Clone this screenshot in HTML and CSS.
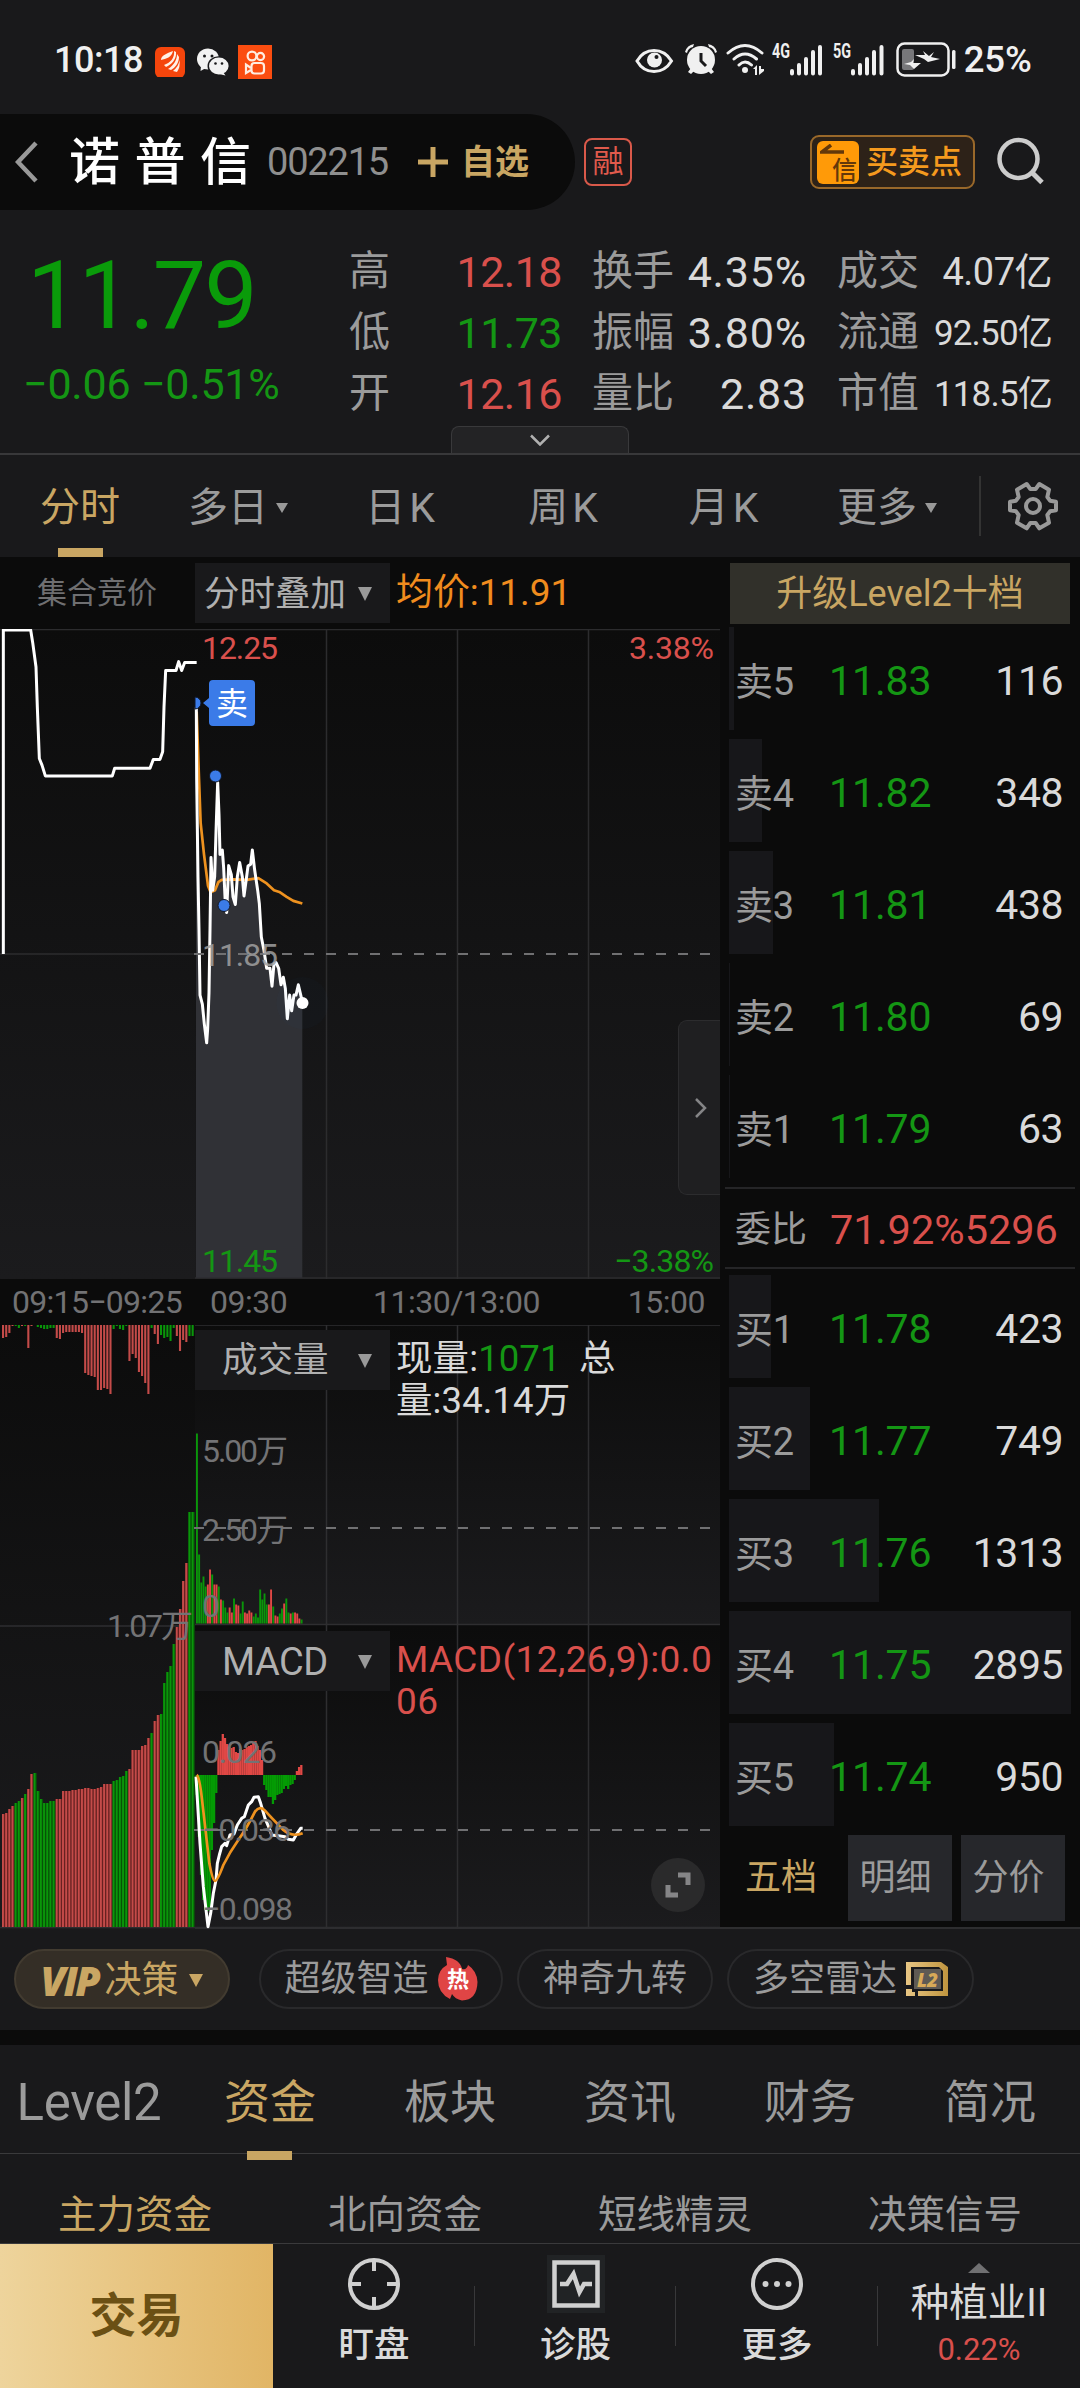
FILE: index.html
```html
<!DOCTYPE html>
<html lang="zh-CN">
<head>
<meta charset="utf-8">
<title>诺普信 002215</title>
<link rel="stylesheet" href="styles.css">
</head>
<body>
<div class="statusbar">
  <span class="clock">10:18</span>
  <svg class="app-a" width="30" height="30" viewBox="0 0 30 30"><rect width="30" height="31" rx="6" fill="#f5450c"/><g fill="#fff0e6"><path d="M6 13C11 12 17 10 18 4C13 6 6 8 6 13Z"/><path d="M9 18C15 16 20 11 19 4L21 5C22 12 16 18 11 20Z"/><path d="M13 22C19 18 22 13 22 7L24 10C24 16 20 21 16 23Z"/><path d="M18 24C22 21 24 17 24.500 13Q25.500 20 22 25Z"/></g></svg>
  <svg class="app-b" width="32" height="28" viewBox="0 0 32 28"><ellipse cx="11" cy="11" rx="11" ry="10.500" fill="#f2f2f2"/><path d="M4 18L3.500 23L9 20Z" fill="#f2f2f2"/><ellipse cx="21.500" cy="18" rx="11" ry="9.800" fill="#19191b"/><ellipse cx="21.800" cy="18" rx="9.800" ry="8.500" fill="#f2f2f2"/><path d="M26 24L28.500 27.500L22 26Z" fill="#f2f2f2"/><g fill="#19191b"><circle cx="7.500" cy="8" r="1.500"/><circle cx="15" cy="8" r="1.500"/><circle cx="18.500" cy="15.500" r="1.300"/><circle cx="25" cy="15.500" r="1.300"/></g></svg>
  <svg class="app-c" width="34" height="34" viewBox="0 0 34 34"><rect width="34" height="34" fill="#fb4d10"/><g fill="none" stroke="#ffece0" stroke-width="2.200"><circle cx="14" cy="11" r="4.400"/><circle cx="22.500" cy="11.500" r="3.600"/><rect x="13.500" y="18" width="12.500" height="10.500" rx="3"/><path d="M13 23L8 19.500V28L13 25"/></g></svg>
  <span class="spacer"></span>
  <svg class="sys" width="370" height="40" viewBox="630 40 370 40">
    <g fill="none" stroke="#f0f0f0" stroke-width="3">
      <path d="M635 62C643 48 661 48 669.500 62C661 76 643 76 635 62Z"/>
      <path d="M726 54Q743 39 760 54M732 60Q743 50 754.500 60M737 66Q743 60 749.500 66" stroke-linecap="round"/>
      <rect x="895.500" y="44.500" width="51" height="32" rx="7" stroke-width="2.500"/>
    </g>
    <circle cx="652.500" cy="61" r="7.500" fill="#f0f0f0"/><circle cx="654.500" cy="58" r="2" fill="#19191b"/>
    <g fill="#f0f0f0"><circle cx="699" cy="61" r="14"/><path d="M683 53Q685 46 692 45L691 48Q686 49 685 54Z"/><path d="M715 53Q713 46 706 45L707 48Q712 49 713 54Z"/><path d="M686 73L689 69L692 72L689 75ZM712 73L709 69L706 72L709 75Z"/><circle cx="743" cy="71" r="3"/><path d="M751 70L755 66V76H753V70ZM757 67V76L762 72V70H759V67Z"/></g>
    <path d="M699 54V62L704 67" fill="none" stroke="#19191b" stroke-width="3"/>
    <g stroke="#f0f0f0" stroke-width="4" stroke-linecap="round"><path d="M790 72V74.500M797 66V74.500M804 60V74.500M811 53V74.500M818 48V74.500M851 72V74.500M858 66V74.500M865 60V74.500M872 53V74.500M879.500 48V74.500"/></g>
    <g class="net"><text x="770" y="59" textLength="18" lengthAdjust="spacingAndGlyphs">4G</text><text x="831" y="59" textLength="18" lengthAdjust="spacingAndGlyphs">5G</text></g>
    <rect x="900" y="50" width="12" height="21" rx="2" fill="#77777a"/><rect x="950" y="51" width="3.500" height="19" rx="1.500" fill="#f0f0f0"/>
    <path d="M921 52L927 57L932 53L929 58L938 60L926 63L922 60L913 56H923ZM912 60L911 64L919 64L912 70L908 66L902 65L909 63Z" fill="#f0f0f0"/>
  </svg>
  <span class="battery">25%</span>
</div>

<header class="header">
  <div class="stock-pill">
    <svg class="back" width="24" height="42" viewBox="0 0 24 42"><path d="M21 2L3 21L21 40" fill="none" stroke="#999" stroke-width="4.500"/></svg>
    <h1>诺普信</h1>
    <span class="code">002215</span>
    <svg class="plus" width="32" height="32" viewBox="0 0 32 32"><path d="M16 1V31M1 16H31" stroke="#c9a663" stroke-width="5"/></svg>
    <span class="fav">自选</span>
  </div>
  <span class="margin-badge">融</span>
  <span class="spacer"></span>
  <div class="signal"><span class="signal-icon"><svg width="26" height="12" viewBox="0 0 26 12"><path d="M11 1L2 8H24" fill="none" stroke="#63380a" stroke-width="3.500"/></svg><i>信</i></span><span>买卖点</span></div>
  <svg class="search" width="50" height="50" viewBox="0 0 50 50"><circle cx="22.500" cy="22" r="19" fill="none" stroke="#ccc" stroke-width="4.500"/><path d="M35.500 35L46 45.500" stroke="#ccc" stroke-width="5"/></svg>
</header>

<section class="quote">
  <div class="price"><div class="last">11.79</div><div class="change">−0.06 −0.51%</div></div>
  <dl class="stats">
    <div><dt>高</dt><dd class="red">12.18</dd></div><div><dt>换手</dt><dd class="strong">4.35%</dd></div><div><dt>成交</dt><dd class="mid">4.07亿</dd></div>
    <div><dt>低</dt><dd class="green">11.73</dd></div><div><dt>振幅</dt><dd class="strong">3.80%</dd></div><div><dt>流通</dt><dd class="small">92.50亿</dd></div>
    <div><dt>开</dt><dd class="red">12.16</dd></div><div><dt>量比</dt><dd class="strong">2.83</dd></div><div><dt>市值</dt><dd class="small">118.5亿</dd></div>
  </dl>
  <div class="expander"><svg width="22" height="12" viewBox="0 0 22 12"><path d="M2 1.500L11 10.500L20 1.500" fill="none" stroke="#b0b0b0" stroke-width="2.500"/></svg></div>
</section>

<nav class="periods">
  <span class="active">分时</span><span>多日<b class="caret"></b></span><span>日<em>K</em></span><span>周<em>K</em></span><span>月<em>K</em></span><span>更多<b class="caret"></b></span>
  <div class="gear"><svg width="52" height="52" viewBox="0 0 52 52"><g fill="none" stroke="#999" stroke-width="12" stroke-linejoin="round" transform="translate(26 26) scale(.33333) translate(-219 -137)"><path d="M200 71L211 86H227L238 71L267 88L262 110L270 121L288 124V150L270 153L262 164L267 187L238 204L227 188H211L200 204L171 187L176 164L168 153L150 150V124L168 121L176 110L171 88Z"/><circle cx="219" cy="137" r="21"/></g></svg></div>
</nav>

<main class="board">
  <section class="charts">
    <div class="chart-head"><span class="auction">集合竞价</span><span class="drop">分时叠加<b class="caret big"></b></span><span class="avg">均价:11.91</span></div>
    <div class="price-chart">
      <svg width="720" height="650" viewBox="0 629 720 650">
        <defs><linearGradient id="shade" x1="0" y1="0" x2="0" y2="1"><stop offset="0" stop-color="#0c0c0c"/><stop offset="1" stop-color="#1b1b1d"/></linearGradient></defs>
        <rect y="629" width="720" height="650" fill="url(#shade)"/>
        <path d="M0 629.500H720M0 954H194M326.500 629V1279M457.500 629V1279M588.500 629V1279M195 1278H720" fill="none" stroke="#2c2c2e" stroke-width="1.500"/>
        <g transform="translate(0 600) scale(.33333 .44643)" stroke-linejoin="round">
          <path fill="#303136" d="M588 1518V240L594 620 597 740 600 885 607 905 613 950 620 992 627 880 630 740 633 577 638 650 644 620 648 520 653 408 657 480 660 570 667 560 671 600 676 680 680 700 686 595 694 615 699 665 706 682 712 620 719 588 727 620 732 663 738 630 744 596 752 592 757 560 764 605 773 650 778 680 784 755 792 785 800 825 810 825 816 865 822 815 828 812 836 825 843 862 850 845 856 870 862 938 869 885 875 920 882 885 888 885 895 862 907 900V1518Z"/>
          <path class="line orange-line" d="M590 250L597 400 602 500 612 570 624 640 632 655 645 650 655 632 665 627 700 626 740 627 775 623 800 635 822 650 838 654 860 665 880 674 907 680"/>
          <path class="line" d="M589 240L590 400 594 620 597 740 600 885 607 905 613 950 620 992 623 960 627 880 630 740 633 577 638 650 644 620 648 520 653 408 657 480 660 570 667 560 671 600 676 680 680 700 686 595 694 615 699 665 706 682 712 620 719 588 727 620 732 663 738 630 744 596 752 592 757 560 764 605 773 650 778 680 784 755 792 785 800 825 810 825 816 865 822 815 828 812 836 825 843 862 850 845 856 870 862 938 869 885 875 920 882 885 888 885 895 862 907 900"/>
          <path class="line" d="M10 793V67H92L98 95 108 150 112 240 118 355 126 370 136 394H337L344 377H450L460 357H480L488 340 492 240 497 158H528L536 138 545 158 554 140H590"/>
        </g>
        <path class="dash" d="M194 954H715"/>
        <circle cx="302.500" cy="1003" r="26" fill="#3b7be8" opacity=".025"/>
        <circle cx="302.500" cy="1003" r="6" fill="#fff"/>
        <g fill="#3b7be8" stroke="#10182a"><path d="M195 697A6 6 0 0 1 195 709Z"/><circle cx="215.500" cy="776" r="6"/><circle cx="224" cy="905.500" r="6"/></g>
        <path d="M203 703L209 698V684Q209 680 213 680H251Q255 680 255 684V722Q255 726 251 726H213Q209 726 209 722V708Z" fill="#3b7be8"/>
        <text class="tag-text" x="216" y="715">卖</text>
        <g class="axis"><text class="t-red" x="202" y="659" textLength="76">12.25</text><text class="t-mid" x="202" y="966" textLength="76">11.85</text><text class="t-green" x="202" y="1272" textLength="76">11.45</text>
        <text class="t-red" x="629" y="659" textLength="85">3.38%</text><text class="t-green" x="614" y="1272" textLength="100">−3.38%</text></g>
      </svg>
      <button class="handle" aria-label="展开"><svg width="14" height="22" viewBox="0 0 14 22"><path d="M2 2L11 11L2 20" fill="none" stroke="#858587" stroke-width="2.500"/></svg></button>
    </div>
    <div class="times"><span>09:15−09:25</span><span>09:30</span><span>11:30/13:00</span><span>15:00</span></div>
    <div class="indicators">
      <svg width="720" height="604" viewBox="0 1325 720 604">
        <rect y="1325" width="195" height="604" fill="url(#shade)"/>
        <rect x="195" y="1325" width="525" height="300" fill="url(#shade)"/><rect x="195" y="1626" width="525" height="302" fill="url(#shade)"/>
        <path d="M195 1325H720M0 1626H194M195 1624.500H720M0 1927.500H720M326.500 1325V1929M457.500 1325V1929M588.500 1325V1929" stroke="#2e2e30" stroke-width="1.500"/>
        <g id="auction-bars"></g><g id="volume-bars"></g><g id="macd-bars"></g>
        <path class="dash" d="M194 1528H715M194 1830H715"/>
        <g transform="translate(180 1560) scale(.33333)" stroke-linejoin="round">
          <path class="line" d="M48 650L60 850 70 980 84 1100 92 1060 100 1000 108 960 112 910 118 885 125 860 135 850 140 857 150 825 162 822 172 795 185 775 193 770 205 735 215 725 222 712 235 710 242 730 255 775 268 805 275 825 300 828 315 830 325 838 340 840 350 822 362 805 368 805"/>
          <path class="line orange-line" d="M50 645Q58 650 65 710T88 910Q98 963 105 963T130 915Q150 875 175 840T225 755Q240 735 255 752T310 810Q335 832 368 820"/>
        </g>
        <g class="axis t-gray"><text x="202" y="1462" textLength="86">5.00万</text><text x="202" y="1541" textLength="86">2.50万</text><text x="202" y="1617">0</text><text x="107" y="1637" textLength="86">1.07万</text><text x="202" y="1763" textLength="75">0.026</text><text x="202" y="1841" textLength="89">−0.036</text><text x="202" y="1920" textLength="91">−0.098</text></g>
      </svg>
      <div class="ind-row first"><span class="drop">成交量<b class="caret big"></b></span><p>现量:<span class="green">1071</span>&nbsp; 总<br>量:34.14万</p></div>
      <div class="ind-row second"><span class="drop macd">MACD<b class="caret big"></b></span><p class="red">MACD(12,26,9):0.0<br>06</p></div>
      <div class="enlarge"><svg width="26" height="26" viewBox="0 0 26 26"><path d="M13 3H23V13M3 13V23H13" fill="none" stroke="#858587" stroke-width="5"/></svg></div>
    </div>
  </section>

  <aside class="book">
    <div class="upgrade">升级Level2十档</div>
    <ul class="levels">
      <li><i style="width:5px"></i><span>卖5</span><b>11.83</b><em>116</em></li>
      <li><i style="width:33px"></i><span>卖4</span><b>11.82</b><em>348</em></li>
      <li><i style="width:44px"></i><span>卖3</span><b>11.81</b><em>438</em></li>
      <li><i style="width:1px"></i><span>卖2</span><b>11.80</b><em>69</em></li>
      <li><i style="width:1px"></i><span>卖1</span><b>11.79</b><em>63</em></li>
    </ul>
    <div class="ratio"><span>委比</span><b>71.92%5296</b></div>
    <ul class="levels">
      <li><i style="width:42px"></i><span>买1</span><b>11.78</b><em>423</em></li>
      <li><i style="width:81px"></i><span>买2</span><b>11.77</b><em>749</em></li>
      <li><i style="width:150px"></i><span>买3</span><b>11.76</b><em>1313</em></li>
      <li><i style="width:342px"></i><span>买4</span><b>11.75</b><em>2895</em></li>
      <li><i style="width:105px"></i><span>买5</span><b>11.74</b><em>950</em></li>
    </ul>
    <div class="book-tabs"><span class="active">五档</span><span>明细</span><span>分价</span></div>
  </aside>
</main>

<section class="chips">
  <div class="chip vip"><strong>VIP</strong>决策<b class="caret gold"></b></div>
  <div class="chip c2">超级智造<svg width="40" height="44" viewBox="0 0 40 44"><path d="M8 0Q22 2 24 12Q29 13 30 8Q39 14 39.500 25Q39 43 24 43.500Q17 42 14 37L12 42Q0 36 0 23Q0 13 9 8Z" fill="#e04545"/><text x="9" y="30">热</text></svg></div>
  <div class="chip c3">神奇九转</div>
  <div class="chip c4">多空雷达<svg width="42" height="34" viewBox="0 0 42 34"><defs><linearGradient id="gold"><stop offset="0" stop-color="#e8c684"/><stop offset="1" stop-color="#c0953f"/></linearGradient></defs><path d="M0 0H35L42 5V34H12V29H37V9L33 5H5V23H0ZM0 27H6V30H9V34H0Z" fill="url(#gold)"/><rect x="8" y="7" width="27" height="20" fill="#5e5a54"/><text class="l2" x="11" y="25" textLength="21">L2</text></svg></div>
</section>

<nav class="sections"><span>Level2</span><span class="active">资金</span><span>板块</span><span>资讯</span><span>财务</span><span>简况</span></nav>
<nav class="subsections"><span class="active">主力资金</span><span>北向资金</span><span>短线精灵</span><span>决策信号</span></nav>

<footer class="toolbar">
  <div class="trade">交易</div>
  <div class="tool"><svg width="58" height="58" viewBox="0 0 58 58"><g fill="none" stroke="#d0d0d0" stroke-width="4"><circle cx="29" cy="29" r="24"/><path d="M29 5V16M29 53V42M5 29H16M53 29H42"/></g></svg><span>盯盘</span></div>
  <div class="tool"><svg width="58" height="58" viewBox="0 0 58 58"><rect width="58" height="58" fill="#212325"/><path d="M7.500 7.500H50.500V50.500H7.500ZM13 29H20L26.500 19L32.500 37L37 29H45" fill="none" stroke="#d0d0d0" stroke-width="4.500"/></svg><span>诊股</span></div>
  <div class="tool"><svg width="58" height="58" viewBox="0 0 58 58"><circle cx="29" cy="29" r="24" fill="none" stroke="#d0d0d0" stroke-width="4"/><g fill="#d0d0d0"><circle cx="17.500" cy="29" r="3"/><circle cx="29" cy="29" r="3"/><circle cx="40.500" cy="29" r="3"/></g></svg><span>更多</span></div>
  <div class="industry"><b class="up"></b><span>种植业II</span><em>0.22%</em></div>
</footer>
<script src="chart.js"></script>
</body>
</html>
```
FILE: styles.css
```css
* { box-sizing: border-box; }
html, body { margin: 0; }
body {
  width: 1080px; height: 2388px; overflow: hidden;
  background: #19191b; color: #9b9b9b;
  font-family: Roboto, "Noto Sans CJK SC", sans-serif;
  font-size: 36px; line-height: 1; white-space: nowrap;
}
h1, p, dl, dd, ul { margin: 0; padding: 0; list-style: none; }
i, em { font-style: normal; }
b { font-weight: 400; }
svg { display: block; flex: none; }
.spacer { flex: 1; }
.red { color: #d9504c; }
.green { color: #149614; }

.statusbar { height: 114px; display: flex; align-items: center; padding: 6px 48px 0 54px; color: #f0f0f0; }
.clock { font-size: 36px; font-weight: 500; letter-spacing: -.5px; width: 101px; }
.app-a { margin-top: 3px; }
.app-b { margin: 4px 0 0 12px; }
.app-c { margin: 3px 0 0 9px; }
.sys { margin: 0 -38px 0 0; transform: translateY(-1px); }
.battery { font-size: 36.500px; font-weight: 500; letter-spacing: 0; }
.net { fill: #f0f0f0; font: 700 20px Roboto, sans-serif; }

.header { height: 96px; display: flex; align-items: center; }
.stock-pill { width: 575px; height: 96px; background: #0b0b0b; border-radius: 0 48px 48px 0; display: flex; align-items: center; padding-left: 15px; }
h1 { font-size: 51px; font-weight: 500; letter-spacing: 14.500px; color: #fff; margin-left: 30px; width: 198px; }
.code { font-size: 38px; letter-spacing: -1.200px; color: #8f8f8f; width: 150px; }
.plus { margin-right: 12px; }
.fav { font-size: 34px; font-weight: 700; color: #c9a663; }
.margin-badge { width: 48px; height: 48px; margin-left: 9px; border: 2px solid #d9594a; border-radius: 8px; color: #e05a4c; font-size: 31px; line-height: 44px; text-align: center; }
.signal { width: 165px; height: 54px; border: 2px solid #99682a; border-radius: 9px; background: #2d2218; color: #f59a1e; font-size: 32px; font-weight: 500; display: flex; align-items: center; padding-left: 5px; gap: 7px; }
.signal-icon { width: 42px; height: 43px; border-radius: 6px; background: #ff9a08; color: #63380a; padding: 3px 2px 0 3px; }
.signal-icon i { display: block; text-align: right; font-size: 25px; margin-top: 2px; line-height: 25px; }
.search { margin: 0 34px 0 21px; }

.quote { height: 245px; border-bottom: 2px solid #38383a; position: relative; display: flex; }
.price { width: 349px; padding-left: 27px; }
.last { font-size: 95px; letter-spacing: -2px; line-height: 96px; color: #0a9b0a; margin-top: 38px; }
.change { font-size: 43px; letter-spacing: -.200px; line-height: 46px; color: #149614; margin: 17px 0 0 -4px; }
.stats { flex: 1; display: grid; grid-template-columns: 213px 215px 215px; column-gap: 30px; grid-auto-rows: 61px; padding-top: 31px; }
.stats div { display: flex; justify-content: space-between; align-items: center; }
.stats dt { font-size: 41px; }
.stats dd { font-size: 43px; letter-spacing: -.500px; padding-top: 1px; }
.strong, .mid, .small { color: #dadada; }
.stats .strong { letter-spacing: .800px; }
.stats .mid { font-size: 38px; letter-spacing: -.500px; }
.stats .small { font-size: 35px; letter-spacing: -.800px; }
.expander { position: absolute; left: 451px; bottom: 0; width: 178px; height: 27px; background: #232325; border: 1px solid #39393b; border-bottom: 0; border-radius: 8px 8px 0 0; display: flex; justify-content: center; align-items: center; }

.periods { height: 102px; display: flex; align-items: center; font-size: 40px; padding-left: 0; }
.periods span { width: 160px; height: 102px; display: flex; justify-content: center; align-items: center; position: relative; padding-top: 4px; }
.periods span:nth-child(3) { width: 168px; }
.periods span:nth-child(2) { width: 156px; }
.periods span:nth-child(4) { width: 158px; }
.periods span:nth-child(5) { width: 163px; }
.periods span:nth-child(6) { width: 164px; }
.periods em { font-size: 41px; margin-left: 4px; }
.periods .active, .sections .active, .subsections .active, .book-tabs .active { color: #c9a663; }
.active { position: relative; }
.periods .active::after, .sections .active::after { content: ""; position: absolute; bottom: 0; left: 50%; width: 45px; height: 9px; margin-left: -22px; background: #c9a663; }
.gear { height: 60px; width: 101px; margin-left: 10px; border-left: 2px solid #333; display: flex; align-items: center; padding-left: 26px; }
.caret { display: inline-block; border: 6px solid transparent; border-top: 10px solid #999; border-bottom: 0; margin-left: 8px; flex: none; }
.caret.big { border-width: 14px 7.500px 0; }

.board { height: 1372px; display: flex; background: #0b0b0b; border-bottom: 2px solid #2e2e30; }
.charts { width: 720px; }
.chart-head { height: 72px; display: flex; align-items: flex-start; padding-top: 6px; }
.chart-head span { line-height: 60px; }
.auction { width: 195px; padding-left: 37px; font-size: 30px; color: #6f6f71; }
.drop { width: 195px; height: 60px; background: #19191b; color: #b0b0b0; display: flex; align-items: center; justify-content: space-between; padding: 2px 18px 0 9px; font-size: 35.500px; }
.avg { color: #f08c1e; padding-left: 6px; font-size: 37px; letter-spacing: -.100px; }
.price-chart, .indicators { position: relative; }
.line { fill: none; stroke: #fff; stroke-width: 3; vector-effect: non-scaling-stroke; }
.orange-line { stroke: #ee921f; stroke-width: 2.700; }
.dash { fill: none; stroke: #707072; stroke-width: 2; stroke-dasharray: 10 12; }
.axis { font-size: 32px; }
.t-red { fill: #d9504c; }
.t-green { fill: #149614; }
.t-mid { fill: #a0a0a0; opacity: .85; }
.t-gray { fill: #737375; }
.tag-text { fill: #fff; font-size: 32px; }
.handle { position: absolute; right: 0; top: 391px; width: 42px; height: 175px; padding: 0 0 0 15px; background: #1f1f21; border: 1px solid #2c2c2e; border-right: 0; border-radius: 9px 0 0 9px; }
.times { height: 46px; display: grid; grid-template-columns: 195px 1fr 1fr 1fr; font-size: 32px; line-height: 46px; color: #727274; letter-spacing: -.500px; }
.times span:first-child { padding-left: 12px; letter-spacing: -.700px; }
.times span:nth-child(2) { padding-left: 15px; }
.times span:nth-child(3) { text-align: center; margin-left: -50px; margin-right: -48px; }
.times span:nth-child(4) { text-align: right; padding-right: 15px; }
.ind-row { position: absolute; left: 195px; display: flex; }
.first { top: 5px; }
.second { top: 306px; }
.ind-row .drop { padding-left: 27px; }
.ind-row .macd { font-size: 38px; letter-spacing: -.500px; }
.ind-row p { padding: 8px 0 0 6px; font-size: 36.500px; line-height: 42px; color: #dadada; letter-spacing: .100px; }
.ind-row p.red { color: #d9504c; font-size: 37px; letter-spacing: .400px; }
.enlarge { position: absolute; left: 651px; top: 533px; width: 54px; height: 54px; border-radius: 50%; background: #2a2a2b; display: flex; align-items: center; justify-content: center; }

.book { flex: 1; }
.upgrade { height: 61px; margin: 6px 10px 3px; background: #31302a; color: #c9a663; font-size: 36px; line-height: 63px; text-align: center; }
.levels { display: grid; grid-auto-rows: 103px; row-gap: 9px; padding-left: 9px; }
.levels li { display: grid; grid-template-columns: 94px 120px 114px; align-items: center; padding: 6px 0 0 6px; position: relative; }
.levels i { position: absolute; left: 0; top: 0; height: 103px; background: #17171a; }
.levels span, .levels b, .levels em { position: relative; }
.levels span { font-size: 38px; letter-spacing: -.200px; }
.levels b { font-size: 41px; letter-spacing: -.100px; color: #149614; }
.levels em { font-size: 41px; letter-spacing: -.500px; color: #dadada; text-align: right; }
.ratio { margin: 9px 5px 6px; height: 82px; border: 2px solid #252527; border-width: 2px 0; display: grid; grid-template-columns: 95px 1fr; padding: 3px 0 0 10px; align-items: center; font-size: 36px; }
.ratio b { color: #d9504c; font-size: 41.500px; letter-spacing: 0; }
.book-tabs { display: grid; grid-template-columns: 104px 104px 104px; gap: 9px; height: 84px; margin: 9px 0 0 15px; line-height: 86px; text-align: center; font-size: 36px; }
.book-tabs span { background: #26272b; padding-right: 9px; }
.book-tabs .active { background: none; padding-right: 12px; }

.chips { height: 101px; display: flex; padding: 20px 14px; }
.chip { height: 60px; border: 2px solid #29292b; border-radius: 30px; display: flex; align-items: center; justify-content: center; }
.chip svg { margin-left: 9px; }
.chip text { font-size: 22px; font-weight: 700; fill: #fff; }
.chip .l2 { font: italic 900 19px "Open Sans", sans-serif; fill: #d8aa58; }
.vip { width: 216px; background: #342e26; border-color: #423b30; color: #c9a663; font-size: 37px; padding-top: 2px; }
.vip strong { font: italic 800 41px "Open Sans", sans-serif; letter-spacing: -2.500px; margin-right: 6px; }
.caret.gold { border-width: 13px 7.500px 0; border-top-color: #c9a663; margin-left: 11px; }
.c2 { width: 244px; margin-left: 29px; }
.c3 { width: 196px; margin-left: 14px; }
.c4 { width: 247px; margin-left: 14px; }

.sections { border-top: 15px solid #0b0b0b; border-bottom: 1px solid #3a3a3c; height: 124px; display: grid; grid-template-columns: repeat(6, 180px); font-size: 46px; line-height: 115px; text-align: center; }
.sections span:first-child { font-size: 51px; letter-spacing: -.300px; padding-right: 2px; }
.sections .active::after { margin-left: -23px; }
.subsections { height: 90px; border-bottom: 1px solid #3a3a3c; display: grid; grid-template-columns: repeat(4, 270px); text-align: center; font-size: 38.500px; line-height: 121px; overflow: hidden; }

.toolbar { height: 144px; display: grid; grid-template-columns: 273px 202px 201px 202px 1fr; }
.trade { background: linear-gradient(90deg, #eed49c, #e1b565); color: #6b5014; font-size: 47px; font-weight: 700; line-height: 144px; text-align: center; }
.tool, .industry { display: flex; flex-direction: column; align-items: center; position: relative; color: #dadada; }
.tool::after { content: ""; position: absolute; right: 0; top: 42px; width: 1px; height: 60px; background: #38383a; }
.tool svg { margin-top: 11px; }
.tool span { font-size: 35.500px; font-weight: 500; margin-top: 15px; }
.up { border: 11px solid transparent; border-top: 0; border-bottom: 10px solid #707072; margin-top: 19px; }
.industry span { font-size: 38.500px; margin-top: 11px; }
.industry em { font-size: 31px; color: #d9504c; margin-top: 11px; }
```
FILE: chart.js
```js
const NS = 'http://www.w3.org/2000/svg';
const RED = '#e04845', DARK_RED = '#c44b49', GREEN = '#0a960a';

function bar(group, x, top, bottom, width, color) {
  const r = document.createElementNS(NS, 'rect');
  r.setAttribute('x', x.toFixed(2));
  r.setAttribute('y', top.toFixed(2));
  r.setAttribute('width', width);
  r.setAttribute('height', Math.max(0, bottom - top).toFixed(2));
  r.setAttribute('fill', color);
  group.appendChild(r);
}

// Call auction: matched volume rises from the floor, unmatched volume hangs from the top.
const auction = document.getElementById('auction-bars');
const matched = [113,114,118,121,124,126,129,133,138,153,154,136,128,124,124,126,126,128,128,136,136,136,137,137,138,138,139,139,138,138,139,140,143,143,143,146,147,150,151,156,158,177,177,177,181,182,189,194,206,212,213,244,255,261,283,300,318,346,364,415,415];
const unmatched = [13,12,8,1,1,3,1,1,23,1,0,2,3,4,4,3,3,13,14,8,7,7,7,7,7,8,48,50,51,52,65,65,63,64,69,4,1,4,5,1,36,29,33,47,51,58,69,3,9,19,10,13,12,16,3,11,26,15,17,11,11];
const auctionSide = 'rrrrggrgrrgggggggrrrrrrrrrrrrrrrrrrgggggrrrrrrrgrrgggggrrrrgg';
matched.forEach((h, i) => {
  const x = 2 + i * 3.16;
  const red = auctionSide[i] === 'r';
  bar(auction, x, 1927 - h, 1927, 3.16, red ? '#672020' : '#075207');
  bar(auction, x, 1927 - h, 1927, 1.9, red ? DARK_RED : GREEN);
  bar(auction, x, 1325, 1325 + unmatched[i], 2.1, red ? DARK_RED : GREEN);
});

// Minute volume.
const volume = document.getElementById('volume-bars');
const vols = [190,69,41,47,37,39,54,49,39,39,37,24,23,16,11,16,11,25,19,18,10,22,11,10,13,11,7,10,6,34,24,30,19,19,34,17,8,7,10,15,20,25,11,10,11,11,10,5,4];
const volSide = 'gggggrrgrrgrgggrrgrrggrrrrgggggggrrgrrggrggrgrrrgg';
vols.forEach((h, i) => bar(volume, 196 + i * 2.18, 1623.5 - h, 1623.5, 1.9, volSide[i] === 'r' ? RED : GREEN));

// MACD histogram around its zero line.
const macd = document.getElementById('macd-bars');
const hist = [-20,-62,-100,-125,-135,-136,-132,-75,-48,-18,25,34,41,37,31,28,27,28,23,22,26,25,26,28,29,30,33,34,29,25,15,-10,-15,-22,-22,-29,-25,-20,-19,-18,-14,-11,-14,-10,-9,-5,4,8,10];
hist.forEach((v, i) => bar(macd, 195.5 + i * 2.18, 1775 - Math.max(v, 0), 1775 + Math.max(-v, 0), 2.3, v > 0 ? RED : '#049b04'));
```
